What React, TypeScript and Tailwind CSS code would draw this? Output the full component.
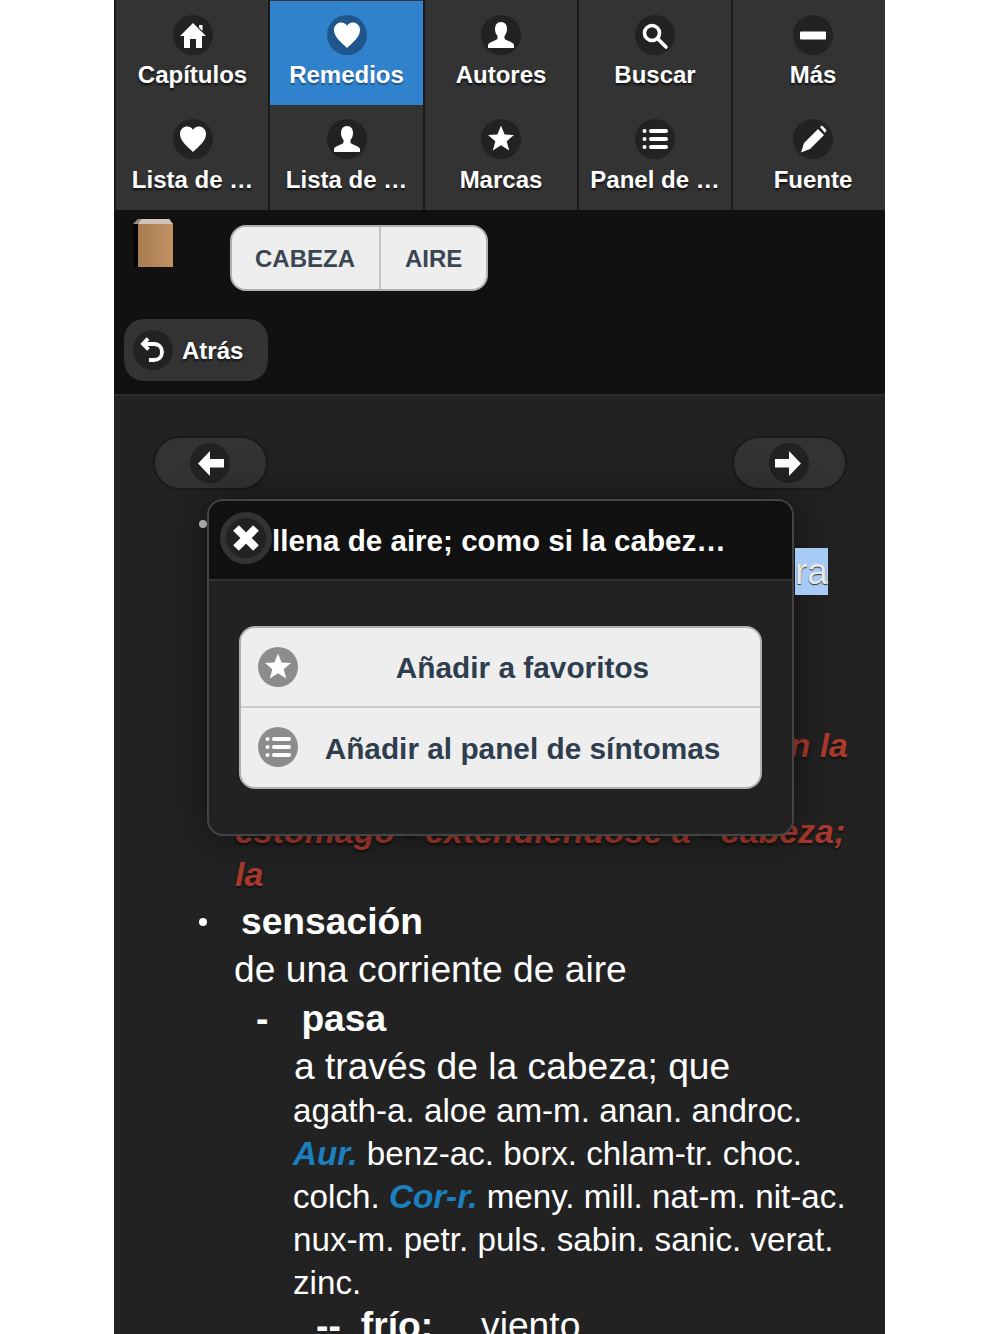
import type { ReactNode } from "react";

const glyphs: Record<string, ReactNode> = {
  home: <path d="M20 8 33 21h-4v12h-6v-9h-6v9h-6V21H7L20 8Zm6 2h3.500V16L26 12.500V10Z" fill="currentColor" />,
  heart: <path d="M20 33C14 27 7 22 7 15c0-5 3.800-7.500 7-7.500 3 0 5 1.500 6 3.500 1-2 3-3.500 6-3.500 3.200 0 7 2.500 7 7.500 0 7-7 12-13 18Z" fill="currentColor" />,
  user: <path d="M20 7c4 0 6 3 6 7 0 3-1 5-2.500 7v2.500c0 2 8.500 3 9.500 6.500v3H7v-3c1-3.500 9.500-4.500 9.500-6.500V21C15 19 14 17 14 14c0-4 2-7 6-7Z" fill="currentColor" />,
  star: <polygon points="20,6.500 23.600,15.500 33,16 25.700,22.200 28.200,31.500 20,26.300 11.800,31.500 14.300,22.200 7,16 16.400,15.500" fill="currentColor" />,
  search: (
    <g fill="none" stroke="currentColor" strokeWidth="3.600">
      <circle cx="17" cy="18" r="7.500" />
      <path d="m23 24 8 8" strokeLinecap="round" />
    </g>
  ),
  minus: <rect x="7" y="16.500" width="26" height="8" rx="1" fill="currentColor" />,
  list: (
    <g fill="currentColor">
      <circle cx="9.500" cy="12" r="2" />
      <circle cx="9.500" cy="20" r="2" />
      <circle cx="9.500" cy="28" r="2" />
      <rect x="14" y="10" width="19" height="4" rx="2" />
      <rect x="14" y="18" width="19" height="4" rx="2" />
      <rect x="14" y="26" width="19" height="4" rx="2" />
    </g>
  ),
  pencil: <path d="m8 33.500 3-9.500L25 10l6 6-14 14-9 3.500ZM27 8l2-1.500 4.500 4.500-1.500 3-5-6Z" fill="currentColor" />,
  back: <path d="M15 8.500 10 14l5.500 5.500M11 14h10c5 0 8 3.500 8 8s-3 8-8 8h-5" fill="none" stroke="currentColor" strokeWidth="3.800" />,
  left: <polygon points="8,20.500 20,8 20,16 34,16 34,24.500 20,24.500 20,33" fill="currentColor" />,
  right: <polygon points="32,20.500 20,8 20,16 6,16 6,24.500 20,24.500 20,33" fill="currentColor" />,
  close: <path d="m10 10 20 20M30 10 10 30" fill="none" stroke="currentColor" strokeWidth="8" />,
};

function Glyph({ name, className = "" }: { name: string; className?: string }) {
  return (
    <svg viewBox="0 0 40 40" className={`w-10 h-10 shrink-0 rounded-full ${className}`}>
      {glyphs[name]}
    </svg>
  );
}

const navItems = [
  { label: "Capítulos", icon: "home", w: "w-[154px] pl-px" },
  { label: "Remedios", icon: "heart", w: "w-[155px]", active: true },
  { label: "Autores", icon: "user", w: "w-[154px]" },
  { label: "Buscar", icon: "search", w: "w-[154px]" },
  { label: "Más", icon: "minus", w: "w-[154px] pl-2" },
  { label: "Lista de …", icon: "heart", w: "w-[154px] pl-px" },
  { label: "Lista de …", icon: "user", w: "w-[155px]" },
  { label: "Marcas", icon: "star", w: "w-[154px]" },
  { label: "Panel de …", icon: "list", w: "w-[154px]" },
  { label: "Fuente", icon: "pencil", w: "w-[154px] pl-2" },
];

const shadow = "[text-shadow:0_2px_2px_#111]";

export default function App() {
  return (
    <div className="bg-white h-[1334px] overflow-hidden font-['Liberation_Sans',Arial,sans-serif]">
      <div className="relative ml-[114px] w-[771px] h-[1334px] overflow-hidden bg-[#222222] text-white">
        {/* Top menu */}
        <nav className="flex flex-wrap h-[210px] bg-[#333333]">
          {navItems.map((item, i) => (
            <div
              key={i}
              className={`${item.w} h-[105px] border-l-2 border-[#1a1a1a] ${i < 5 ? "pt-px" : ""}`}
            >
              <div className={`flex flex-col items-center h-full pt-[14px] ${item.active ? "bg-[#3182cc]" : ""}`}>
                <Glyph name={item.icon} className={item.active ? "bg-[#1f568c]" : "bg-[#222222]"} />
                <span
                  className={`${i < 5 ? "mt-[5px]" : "mt-[6px]"} text-2xl leading-[30px] font-bold whitespace-pre ${item.active ? "[text-shadow:0_2px_1px_#1f568c]" : shadow}`}
                >
                  {item.label}
                </span>
              </div>
            </div>
          ))}
        </nav>

        {/* Breadcrumb header */}
        <header className="h-[186px] bg-[#111111] border-b-2 border-[#2c2c2c]">
          <div className="flex h-[109px]">
            <svg viewBox="0 0 44 52" className="w-11 h-[52px] ml-[17px] mt-2 shrink-0">
              <defs>
                <linearGradient id="bookFill" x1="0" y1="0" x2="1" y2="0">
                  <stop offset="0" stopColor="#a87c52" />
                  <stop offset="1" stopColor="#c09264" />
                </linearGradient>
              </defs>
              <path d="M7 6 10 1h28l4 5v43H7Z" fill="url(#bookFill)" />
              <path d="M10 1h28l4 5H7Z" fill="#cfc4b6" />
              <path d="M2 6h5v43H3Z" fill="#050505" />
              <path d="M2 6l5-5h3L7 6Z" fill="#8f8f8f" />
            </svg>
            <div className="flex h-[66px] ml-[55px] mt-[15px] rounded-2xl bg-[#eeeeee] border-2 border-[#b0b0b0] text-2xl font-bold text-[#3a4654] items-center">
              <span className="flex items-center h-full pl-[23px] pr-[24px] pt-0.5 border-r-2 border-[#c4c4c4]">CABEZA</span>
              <span className="pl-[24px] pr-[24px] pt-0.5">AIRE</span>
            </div>
          </div>
          <button className="flex items-center gap-[9px] h-[62px] w-[144px] ml-[10px] pl-[9px] rounded-[20px] bg-[#333333] text-2xl font-bold">
            <Glyph name="back" className="bg-[#222222]" />
            <span className={`pt-0.5 ${shadow}`}>Atrás</span>
          </button>
        </header>

        {/* Remedy text */}
        <main>
          <div className="flex justify-between pl-[39px] pr-[38px] pt-[40px]">
            <div className="flex justify-center items-center w-[115px] h-[54px] pr-[2px] rounded-full bg-[#333333] border-2 border-[#1a1a1a]">
              <Glyph name="left" className="bg-[#222222]" />
            </div>
            <div className="flex justify-center items-center w-[115px] h-[54px] pr-[2px] rounded-full bg-[#333333] border-2 border-[#1a1a1a]">
              <Glyph name="right" className="bg-[#222222]" />
            </div>
          </div>

          <div className="flex items-center h-[58px] pl-[85px]">
            <span className="w-2 h-2 mt-[10px] rounded-full bg-[#cccccc]" />
          </div>
          <div className="relative z-10 flex justify-end pr-[57px] text-[37.2px] leading-[47px]">
            <span className="bg-[#a8cbf5] text-[#e8e8e8] [text-shadow:0_1px_1px_#333]">ra</span>
          </div>

          <div className="mt-[129px] pl-[121px] text-[34px] leading-[43px] font-bold italic text-[#a93a2d] [text-shadow:0_2px_2px_#111]">
            <div className="flex justify-end pr-[37px]">n la</div>
            <div className="h-[43px]" />
            <div className="whitespace-pre text-[33.9px]">estómago - extendiéndose a - cabeza;</div>
            <div>la</div>
          </div>

          <div className="flex items-center h-[49px] pt-[3px] pl-[85px] text-[37.2px] font-bold">
            <span className="w-2 h-2 rounded-full bg-white" />
            <span className="ml-[34px]">sensación</span>
          </div>
          <div className="pl-[120px] text-[37.2px] leading-[49px]">de una corriente de aire</div>
          <div className="flex pl-[142px] text-[37.2px] leading-[48px] font-bold">
            <span>-</span>
            <span className="ml-[33px]">pasa</span>
          </div>
          <div className="pl-[180px] text-[37.2px] leading-[48px]">a través de la cabeza; que</div>
          <div className="pl-[179px] text-[33.2px] leading-[43px] whitespace-pre -mt-px">
            <div>agath-a. aloe am-m. anan. androc.</div>
            <div>
              <b className="italic text-[#1a80c0]">Aur.</b> benz-ac. borx. chlam-tr. choc.
            </div>
            <div>
              colch. <b className="italic text-[#1a80c0]">Cor-r.</b> meny. mill. nat-m. nit-ac.
            </div>
            <div>nux-m. petr. puls. sabin. sanic. verat.</div>
            <div>zinc.</div>
          </div>
          <div className="flex pl-[202px] text-[37.2px] leading-[43px]">
            <b>--</b>
            <b className="ml-[20px]">frío:</b>
            <span className="ml-[48px]">viento</span>
          </div>
        </main>

        {/* Options dialog */}
        <div className="absolute left-[93px] top-[499px] w-[587px] h-[337px] rounded-2xl bg-[#222222] border-2 border-[#444444] overflow-hidden shadow-[0_0_40px_rgba(0,0,0,0.5)]">
          <div className="flex items-center h-[80px] pt-0.5 bg-[#111111] border-b-2 border-[#333333] pl-[63px]">
            <span className={`text-[29.6px] font-bold whitespace-pre ${shadow}`}>llena de aire; como si la cabez…</span>
          </div>
          <div className="mt-[45px] mx-[30px] rounded-2xl bg-[#eeeeee] border-2 border-[#b0b0b0] text-[29.8px] font-bold text-[#2f3e4e] whitespace-nowrap">
            <div className="relative flex justify-center items-center h-[80px] pl-[84px] pr-[40px] pt-0.5 border-b-2 border-[#cccccc]">
              <Glyph name="star" className="absolute left-[17px] top-[19px] bg-[#8c8c8c] text-white" />
              Añadir a favoritos
            </div>
            <div className="relative flex justify-center items-center h-[79px] pl-[84px] pr-[40px] pt-1">
              <Glyph name="list" className="absolute left-[17px] top-[19px] bg-[#8c8c8c] text-white" />
              Añadir al panel de síntomas
            </div>
          </div>
        </div>
        <div className="absolute left-[106px] top-[512px] flex items-center justify-center w-[52px] h-[52px] rounded-full bg-[#222222] border-[6px] border-[#333333]">
          <Glyph name="close" className="w-10 h-10" />
        </div>
      </div>
    </div>
  );
}
